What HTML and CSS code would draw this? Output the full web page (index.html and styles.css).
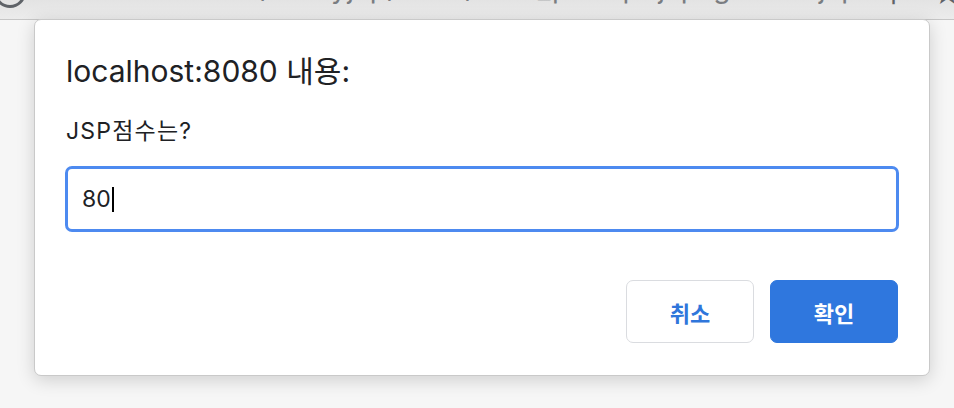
FILE: index.html
```html
<!DOCTYPE html>
<html lang="ko">
<head>
<meta charset="utf-8">
<title>localhost:8080 내용</title>
<link rel="stylesheet" href="styles.css">
</head>
<body>
<div class="toolbar">
  <span class="tb-icon tb-info"></span>
  <span class="tb-url">localhost:8080/studyjsp/ch07/ex07_prompt.jsp?gubun=jsp</span>
  <span class="tb-spacer"></span>
  <span class="tb-key">⚲</span>
  <span class="tb-star">☆</span>
</div>
<div class="stage">
  <div class="dialog" role="dialog">
    <div class="title">localhost:8080 내용:</div>
    <div class="message">JSP점수는?</div>
    <div class="field"><span class="value">80</span><span class="caret"></span></div>
    <div class="actions">
      <button class="btn btn-cancel">취소</button>
      <button class="btn btn-ok">확인</button>
    </div>
  </div>
</div>
</body>
</html>
```
FILE: styles.css
```css
html, body {
  margin: 0;
  padding: 0;
}
body {
  width: 954px;
  height: 408px;
  overflow: hidden;
  background: #f6f6f6;
  font-family: Inter, "Noto Sans CJK KR", sans-serif;
  color: #202124;
}
.toolbar {
  height: 19px;
  border-bottom: 1px solid #c6c6c6;
  background: linear-gradient(#e3e3e3, #ececec);
  display: flex;
  align-items: flex-start;
  overflow: hidden;
}
.tb-icon {
  width: 26px;
  height: 26px;
  border: 3px solid #5f6368;
  border-radius: 50%;
  margin: -24px 0 0 -6px;
  flex: none;
}
.tb-url {
  margin: -26px 0 0 30px;
  font-size: 28px;
  line-height: 28px;
  color: #7a7d81;
  white-space: nowrap;
  letter-spacing: 0.5px;
}
.tb-spacer { flex: 1; }
.tb-key {
  margin: -22px 30px 0 0;
  font-size: 26px;
  line-height: 28px;
  color: #5f6368;
}
.tb-star {
  margin: -20px -8px 0 0;
  font-size: 28px;
  line-height: 28px;
  color: #5f6368;
}
.stage {
  padding-left: 34px;
}
.dialog {
  margin-top: -1px;
  width: 896px;
  height: 357px;
  box-sizing: border-box;
  background: #fff;
  border: 1px solid #c9c9c9;
  border-radius: 7px;
  box-shadow: 0 4px 18px rgba(0, 0, 0, 0.16);
  padding: 33px 30px 0 30px;
  display: flex;
  flex-direction: column;
}
.title {
  font-size: 30px;
  line-height: 36px;
  padding-left: 1px;
}
.message {
  margin-top: 28px;
  font-size: 23px;
  line-height: 28px;
  letter-spacing: 1.2px;
  padding-left: 1px;
}
.field {
  margin-top: 21px;
  height: 66px;
  box-sizing: border-box;
  border: 3px solid #4d8af0;
  border-radius: 7px;
  display: flex;
  align-items: center;
  padding-left: 14px;
}
.value {
  font-size: 23px;
  line-height: 28px;
  color: #202124;
}
.caret {
  width: 2px;
  height: 25px;
  background: #000;
  margin-left: 1px;
}
.actions {
  margin-top: 48px;
  display: flex;
  justify-content: flex-end;
  gap: 16px;
  padding-right: 1px;
}
.btn {
  width: 128px;
  height: 63px;
  border-radius: 7px;
  font-family: Inter, "Noto Sans CJK KR", sans-serif;
  font-size: 22px;
  font-weight: 700;
  cursor: pointer;
}
.btn-cancel {
  background: #fff;
  border: 1px solid #dadce0;
  color: #2f76db;
}
.btn-ok {
  background: #2f77de;
  border: 1px solid #2f77de;
  color: #fff;
}
```
